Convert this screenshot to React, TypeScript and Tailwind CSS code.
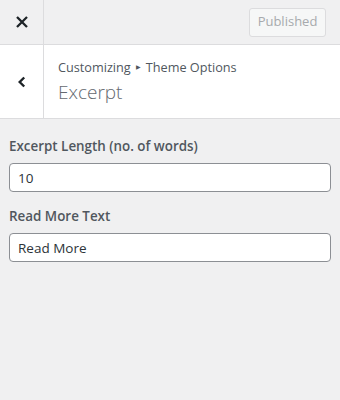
import React from 'react';

const CloseIcon: React.FC = () => (
  <svg width="12" height="12" viewBox="0 0 12 12" fill="none">
    <path d="M1.8 1.8L10.2 10.2M10.2 1.8L1.8 10.2" stroke="#1d2327" strokeWidth="2.3" strokeLinecap="square" />
  </svg>
);

const BackIcon: React.FC = () => (
  <svg width="10" height="14" viewBox="0 0 10 14" fill="none">
    <path d="M7.2 2.5L2.7 7L7.2 11.5" stroke="#1d2327" strokeWidth="2.4" />
  </svg>
);

const Field: React.FC<{ label: string; value: string }> = ({ label, value }) => (
  <div className="flex flex-col">
    <label className="text-[13.4px] font-semibold text-[#50575e] leading-5 mb-[7px]">{label}</label>
    <input
      readOnly
      value={value}
      className="h-[29px] w-full rounded-[4px] border border-[#8c8f94] bg-white px-[8px] text-[13.5px] text-[#2c3338] outline-none"
    />
  </div>
);

export default function App() {
  return (
    <div
      className="w-[340px] h-[400px] bg-[#f0f0f1] flex flex-col"
      style={{ fontFamily: '"Open Sans", "Noto Sans", sans-serif' }}
    >
      <div className="h-[45px] flex items-stretch border-b border-[#dcdcde] shrink-0">
        <button className="w-[44px] flex items-center justify-center border-r border-[#dcdcde]">
          <CloseIcon />
        </button>
        <div className="flex-1 flex items-center justify-end pr-[14px]">
          <div className="h-[29px] w-[77px] flex items-center justify-center rounded-[3px] border border-[#dcdcde] bg-[#f6f7f7] text-[13px] text-[#a7aaad]">
            Published
          </div>
        </div>
      </div>
      <div className="h-[74px] bg-white flex items-stretch border-b border-[#dcdcde] shrink-0">
        <button className="w-[44px] flex items-center justify-center border-r border-[#dcdcde]">
          <BackIcon />
        </button>
        <div className="flex-1 flex flex-col pl-[14px] pt-[13px]">
          <div className="text-[12.7px] leading-[18px] text-[#50575e] flex items-center">
            Customizing
            <span className="text-[6px] mx-[5px] text-[#50575e]">▶</span>
            Theme Options
          </div>
          <div className="text-[19px] font-light leading-[28px] text-[#646970] mt-[2px]">Excerpt</div>
        </div>
      </div>
      <div className="flex flex-col gap-[14px] px-[9px] pt-[17px]">
        <Field label="Excerpt Length (no. of words)" value="10" />
        <Field label="Read More Text" value="Read More" />
      </div>
    </div>
  );
}
